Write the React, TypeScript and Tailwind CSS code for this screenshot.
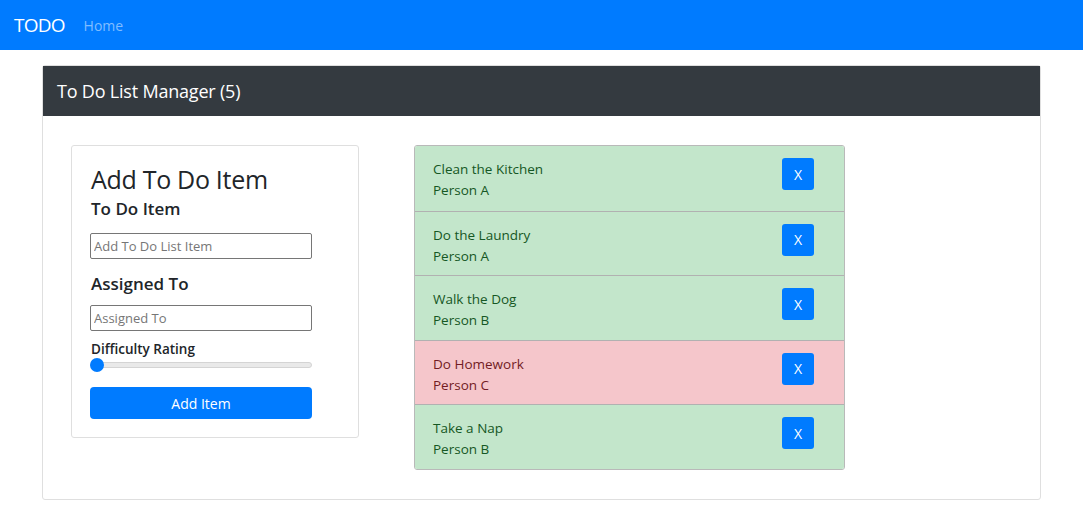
import React, { useState } from 'react';

type Todo = { id: number; text: string; assignee: string; done: boolean };

const App: React.FC = () => {
  const [items, setItems] = useState<Todo[]>([
    { id: 1, text: 'Clean the Kitchen', assignee: 'Person A', done: true },
    { id: 2, text: 'Do the Laundry', assignee: 'Person A', done: true },
    { id: 3, text: 'Walk the Dog', assignee: 'Person B', done: true },
    { id: 4, text: 'Do Homework', assignee: 'Person C', done: false },
    { id: 5, text: 'Take a Nap', assignee: 'Person B', done: true },
  ]);

  return (
    <div className="min-h-screen bg-white text-[#212529]" style={{ fontFamily: '"Open Sans", "Noto Sans", sans-serif' }}>
      {/* Navbar */}
      <nav className="h-[50px] bg-[#007bff] flex items-center px-[14px]">
        <span className="text-[19px] text-white tracking-[-0.8px]">TODO</span>
        <a className="ml-[19px] text-[14px] text-[#80bdff]">Home</a>
      </nav>

      <div className="mx-[42px] mt-[15px] w-[999px] border border-[#dfdfdf] rounded-[3px]">
        <div className="h-[50px] bg-[#343a40] text-white text-[18px] flex items-center px-[14px] tracking-[-0.2px]">
          To Do List Manager ({items.length})
        </div>

        <div className="flex items-start pt-[29px] pb-[29px] pl-[28px]">
          {/* Form */}
          <div className="w-[288px] border border-[#dfdfdf] rounded-[3px] px-[18px] pt-[18px] pb-[18px]">
            <h2 className="text-[25px] font-medium leading-[30px] tracking-[-0.3px] pl-[1px]">Add To Do Item</h2>
            <h3 className="text-[17px] font-semibold leading-[22px] mt-[4px] pl-[1px]">To Do Item</h3>
            <input
              placeholder="Add To Do List Item"
              className="mt-[13px] w-[222px] h-[26px] border border-[#767676] rounded-[2px] px-[3px] text-[13px] placeholder:text-[#767676] outline-none"
            />
            <h3 className="text-[17px] font-semibold leading-[22px] mt-[14px] pl-[1px]">Assigned To</h3>
            <input
              placeholder="Assigned To"
              className="mt-[10px] w-[222px] h-[26px] border border-[#767676] rounded-[2px] px-[3px] text-[13px] placeholder:text-[#767676] outline-none"
            />
            <div className="text-[13.5px] font-semibold mt-[9px] leading-[18px] pl-[1px]">Difficulty Rating</div>
            <div className="relative w-[222px] h-[14px] flex items-center">
              <div className="w-full h-[6px] rounded-full bg-[#e9e9e9] border border-[#d4d4d4]" />
              <div className="absolute left-0 top-0 w-[14px] h-[14px] rounded-full bg-[#007bff]" />
            </div>
            <button className="mt-[15px] w-[222px] h-[32px] bg-[#007bff] text-white text-[14px] rounded-[4px]">
              Add Item
            </button>
          </div>

          {/* List */}
          <ul className="ml-[55px] w-[431px] border border-[#b9b9b9] rounded-[3px] overflow-hidden">
            {items.map((item, i) => (
              <li
                key={item.id}
                className={`h-[64.5px] flex items-start justify-between pt-[12px] pl-[18px] pr-[30px] ${
                  item.done ? 'bg-[#c3e6cb] text-[#155724]' : 'bg-[#f5c6cb] text-[#721c24]'
                } ${i > 0 ? 'border-t border-[#b1b1b1]' : ''}`}
              >
                <div className="text-[13.5px] leading-[21px] mt-[1px]">
                  <div>{item.text}</div>
                  <div>{item.assignee}</div>
                </div>
                <button
                  onClick={() => setItems(items.filter((t) => t.id !== item.id))}
                  className="w-[32px] h-[32px] bg-[#007bff] text-white text-[14px] rounded-[3px]"
                >
                  X
                </button>
              </li>
            ))}
          </ul>
        </div>
      </div>
    </div>
  );
};

export default App;
